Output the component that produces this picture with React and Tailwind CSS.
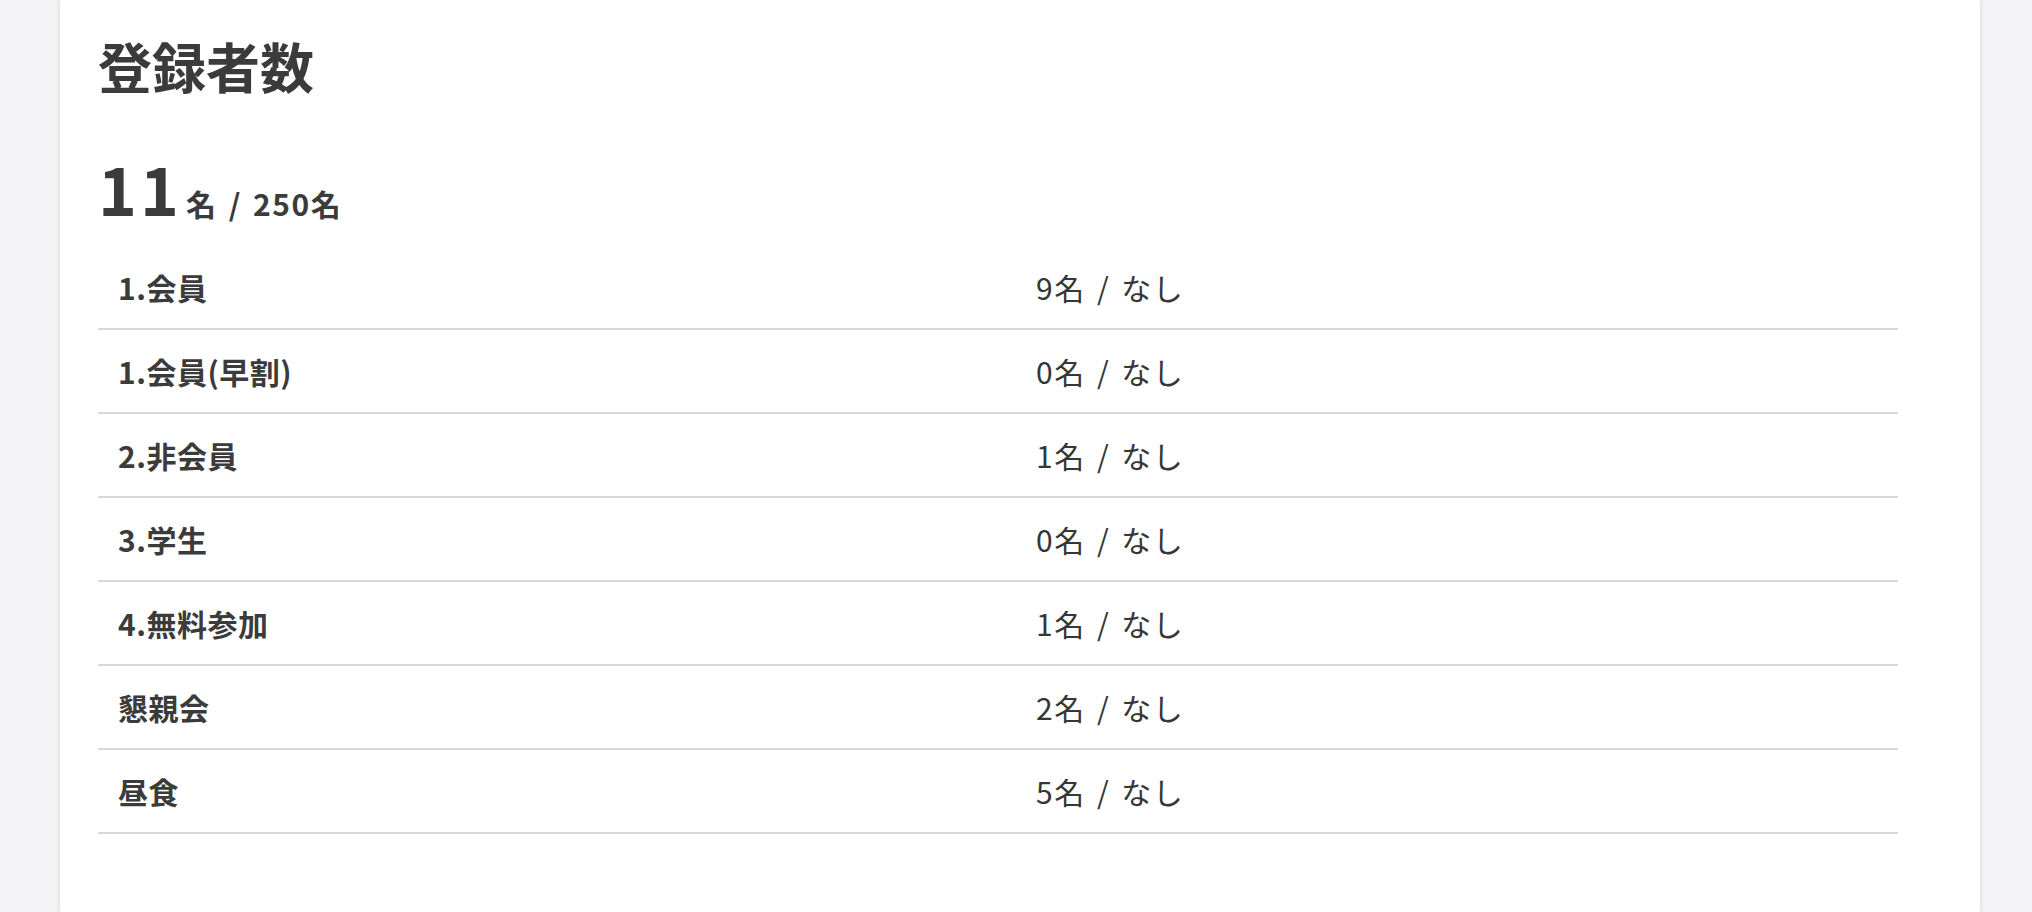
const FONT = { fontFamily: '"Noto Sans CJK JP", "Noto Sans", sans-serif' };

const rows = [
  { label: '1.会員', count: 9 },
  { label: '1.会員(早割)', count: 0 },
  { label: '2.非会員', count: 1 },
  { label: '3.学生', count: 0 },
  { label: '4.無料参加', count: 1 },
  { label: '懇親会', count: 2 },
  { label: '昼食', count: 5 },
];

export default function App() {
  return (
    <div className="min-h-[912px] bg-[#f3f3f5] flex overflow-hidden" style={FONT}>
      <div className="ml-[60px] w-[1920px] min-h-[912px] bg-white shadow-[0_0_5px_rgba(0,0,0,0.12)] pl-[38px] pt-[36px] text-[#3b3b3b]">
        <h2 className="text-[54px] leading-[60px] font-bold">登録者数</h2>

        <div className="mt-[58px] flex items-baseline">
          <span className="text-[66px] leading-[66px] font-bold tracking-[3px]">11</span>
          <span className="ml-[4px] text-[30px] font-bold tracking-[1.5px] [word-spacing:3px]">名 / 250名</span>
        </div>

        {/* 区分ごとの人数 */}
        <div className="mt-[20px] w-[1800px]">
          {rows.map((r) => (
            <div key={r.label} className="flex items-center h-[84px] border-b-2 border-[#d9d9d9]">
              <div className="w-[918px] pl-[20px] text-[30px] font-bold tracking-[0.5px]">{r.label}</div>
              <div className="pl-[20px] text-[30px] text-[#363636] tracking-[1.5px] [word-spacing:3px]">{r.count}名 / なし</div>
            </div>
          ))}
        </div>
      </div>
    </div>
  );
}
